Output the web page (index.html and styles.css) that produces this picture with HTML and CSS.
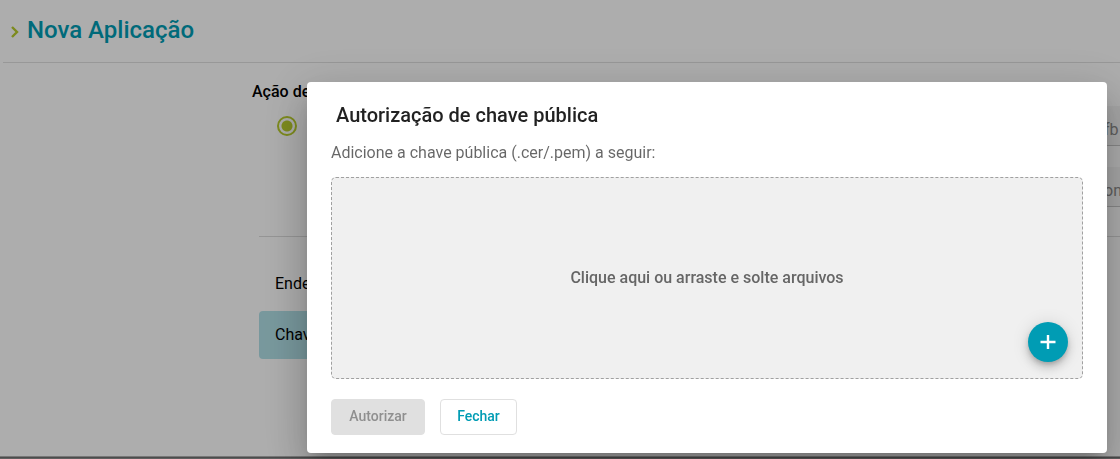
FILE: index.html
```
<!DOCTYPE html>
<html lang="pt-BR">
<head>
  <meta charset="UTF-8">
  <meta name="viewport" content="width=device-width, initial-scale=1">
  <title>Nova Aplicação</title>
  <link rel="stylesheet" href="styles.css">
</head>
<body>
  <div class="page">
    <header class="page-header">
      <svg class="chevron" viewBox="0 0 8 12" aria-hidden="true"><path d="M1 1l5 5-5 5"/></svg>
      <h1>Nova Aplicação</h1>
    </header>

    <main class="content">
      <section class="action">
        <div class="action-type">
          <label for="action">Ação de</label>
          <input type="radio" id="action" class="radio" checked>
        </div>
        <div class="fields">
          <input type="text" class="field" aria-label="Identificador" value="fb">
          <input type="text" class="field" aria-label="Nome" value="on">
        </div>
      </section>
      <nav class="tabs">
        <a href="#ende" class="tab">Ende</a>
        <a href="#chav" class="tab active">Chav</a>
      </nav>
    </main>
  </div>
  <footer class="footer"></footer>

  <div class="overlay">
    <div class="dialog" role="dialog" aria-modal="true" aria-labelledby="dialog-title">
      <h2 id="dialog-title">Autorização de chave pública</h2>
      <p class="description">Adicione a chave pública (.cer/.pem) a seguir:</p>
      <div class="dropzone">
        <p>Clique aqui ou arraste e solte arquivos</p>
        <button type="button" class="fab" aria-label="Adicionar arquivo">
          <svg viewBox="0 0 16 16" aria-hidden="true"><path d="M8 1v14M0.5 8h15"/></svg>
        </button>
      </div>
      <div class="actions">
        <button type="button" class="btn btn-primary" disabled>Autorizar</button>
        <button type="button" class="btn btn-outlined">Fechar</button>
      </div>
    </div>
  </div>
</body>
</html>
```
FILE: styles.css
```
* {
  box-sizing: border-box;
}

body {
  margin: 0;
  min-height: 100vh;
  display: flex;
  flex-direction: column;
  overflow: hidden;
  font-family: Roboto, "Liberation Sans", sans-serif;
  font-size: 16px;
  line-height: 24px;
  color: rgba(0, 0, 0, 0.87);
  background: #fff;
}

h1, h2, p {
  margin: 0;
}

button, input {
  font-family: inherit;
}

.page {
  flex: 1;
}

.page-header {
  display: flex;
  align-items: center;
  gap: 8px;
  height: 63px;
  margin-left: 3px;
  padding: 0 8px 3px;
  border-bottom: 1px solid #e0e0e0;
}

.page-header h1 {
  font-size: 24px;
  line-height: 32px;
  font-weight: 500;
  color: #009cb4;
}

.chevron {
  width: 8px;
  height: 12px;
  margin-top: 4px;
  fill: none;
  stroke: #b8cc2c;
  stroke-width: 2.4;
}

.content {
  padding: 17px 0 0 252px;
}

.action {
  display: flex;
  justify-content: space-between;
  height: 157px;
  margin-left: 7px;
  border-bottom: 1px solid #dcdcdc;
}

.action-type {
  margin-left: -7px;
}

.action-type label {
  display: block;
  font-weight: 500;
  color: #000;
}

.radio {
  appearance: none;
  display: block;
  width: 20px;
  height: 20px;
  margin: 12px 0 0 25px;
  border: 2px solid #b8cc2c;
  border-radius: 50%;
  background: radial-gradient(circle, #b8cc2c 5px, transparent 6px);
}

.fields {
  display: flex;
  flex-direction: column;
  gap: 21px;
  width: 16px;
  padding-top: 26px;
}

.field {
  width: 100%;
  height: 40px;
  padding: 7px 0 0;
  border: 0;
  border-bottom: 1px solid #c8c8c8;
  border-radius: 0;
  font-size: 16px;
  color: #8c8c8c;
  background: #f5f5f5;
}

.tabs {
  display: flex;
  flex-direction: column;
  gap: 3px;
  width: 240px;
  margin: 23px 0 0 7px;
}

.tab {
  padding: 12px 16px;
  border-radius: 4px;
  color: #000;
  text-decoration: none;
}

.tab.active {
  background: #b2e1e8;
}

.footer {
  height: 3px;
  border-top: 1px solid #b0b0b0;
  border-bottom: 1px solid #909090;
  background: #707070;
}

.overlay {
  position: fixed;
  inset: 0;
  display: flex;
  align-items: flex-end;
  justify-content: flex-end;
  padding: 6px 13px;
  background: rgba(0, 0, 0, 0.32);
}

.dialog {
  width: 100%;
  max-width: 800px;
  padding: 17px 24px 18px;
  border-radius: 4px;
  background: #fff;
  box-shadow: 0 11px 15px -7px rgba(0, 0, 0, 0.2), 0 24px 38px 3px rgba(0, 0, 0, 0.14), 0 9px 46px 8px rgba(0, 0, 0, 0.12);
}

.dialog h2 {
  padding-left: 5px;
  font-size: 20px;
  line-height: 32px;
  font-weight: 500;
}

.description {
  margin: 10px 0 12px;
  color: rgba(0, 0, 0, 0.6);
}

.dropzone {
  position: relative;
  display: flex;
  align-items: center;
  justify-content: center;
  height: 202px;
  border: 1px dashed #a0a0a0;
  border-radius: 5px;
  color: #666;
  font-weight: 500;
  background: #f0f0f0;
}

.fab {
  position: absolute;
  right: 14px;
  bottom: 16px;
  display: flex;
  align-items: center;
  justify-content: center;
  width: 40px;
  height: 40px;
  padding: 0;
  border: 0;
  border-radius: 50%;
  background: #009cb4;
  box-shadow: 0 3px 5px -1px rgba(0, 0, 0, 0.2), 0 6px 10px rgba(0, 0, 0, 0.14), 0 1px 18px rgba(0, 0, 0, 0.12);
  cursor: pointer;
}

.fab svg {
  width: 16px;
  height: 16px;
  stroke: #fff;
  stroke-width: 2.4;
}

.actions {
  display: flex;
  gap: 15px;
  margin-top: 20px;
}

.btn {
  height: 36px;
  padding: 0 15px 2px;
  border: 1px solid #e0e0e0;
  border-radius: 4px;
  font-size: 14px;
  font-weight: 500;
  background: #fff;
  cursor: pointer;
}

.btn-primary {
  min-width: 94px;
}

.btn-outlined {
  min-width: 77px;
  color: #009cb4;
}

.btn:disabled {
  color: #8f8f8f;
  background: #e0e0e0;
  cursor: default;
}
```
